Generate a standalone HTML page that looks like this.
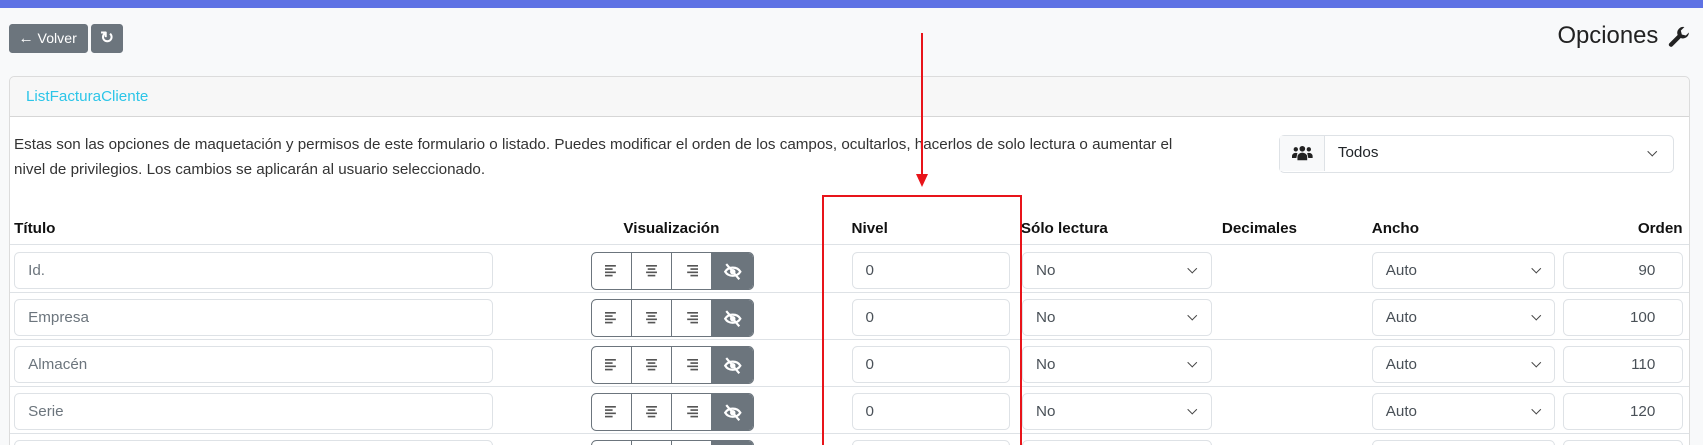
<!DOCTYPE html>
<html><head><meta charset="utf-8"><style>
html{zoom:1.0861;height:410px;overflow:hidden}
*{box-sizing:border-box;margin:0;padding:0}
body{width:1568px;height:410px;overflow:hidden;background:#f8f9fa;font-family:"Liberation Sans",sans-serif;font-size:14px;color:#212529;position:relative}
.a{position:absolute}
.btn{background:#6c757d;color:#fff;border-radius:3px;height:27px;top:22px;font-size:13px;line-height:27px}
.card{left:8px;top:70px;width:1548px;height:360px;border:1px solid #dcdcdc;border-radius:5px;background:#fff;overflow:hidden}
.hdr{left:0;top:0;width:100%;height:37px;background:#f7f7f7;border-bottom:1px solid #d6d6d6}
.in{border:1px solid #dee2e6;border-radius:5px;background:#fff;height:34px;line-height:33px;padding-left:12px;color:#495057;font-size:14px}
.th{font-weight:bold;top:203px;font-size:14px;color:#111}
.line{left:9px;width:1546px;height:1px;background:#dee2e6}
.chev{position:absolute;right:14px;top:11px;width:6px;height:6px;border-right:1.3px solid #444;border-bottom:1.3px solid #444;transform:rotate(45deg)}
.bg{border:1px solid #6c757d;border-radius:5px;height:35px;width:150px;display:flex;overflow:hidden;background:#fff}
.bg div{width:37px;border-right:1px solid #6c757d;position:relative}
.bg div:last-child{border:none;background:#6c757d;flex:1}
</style></head><body>
<div class="a" style="left:0;top:0;width:1568px;height:7px;background:#5e72e4"></div>
<div class="a btn" style="left:8px;width:73px;padding-left:9px"><span style="font-size:14px">&#8592;</span> Volver</div>
<div class="a btn" style="left:84px;width:29px;text-align:center;font-size:15px;font-weight:bold">&#8635;</div>
<div class="a" style="left:1434px;top:20px;font-size:22px;color:#222">Opciones</div>
<svg class="a" style="left:1535px;top:24px" width="22" height="22" viewBox="0 0 24 24"><path d="M22 6.5a6 6 0 0 1-8.2 5.6L5.5 20.4a2.2 2.2 0 0 1-3.1-3.1l8.3-8.3A6 6 0 0 1 17.5 1l-3.6 3.6 1 4 4 1L22 6.5z" fill="#222"/></svg>
<div class="a card">
 <div class="a hdr"><span class="a" style="left:15px;top:10px;color:#2cc5e8">ListFacturaCliente</span></div>
 <div class="a" style="left:4px;top:52px;width:1095px;line-height:23px;color:#333">Estas son las opciones de maquetación y permisos de este formulario o listado. Puedes modificar el orden de los campos, ocultarlos, hacerlos de solo lectura o aumentar el nivel de privilegios. Los cambios se aplicarán al usuario seleccionado.</div>
 <div class="a" style="left:1169px;top:53px;width:363px;height:35px;border:1px solid #dee2e6;border-radius:5px">
  <div class="a" style="left:0;top:0;width:41px;height:33px;background:#f8f9fa;border-right:1px solid #dee2e6"></div>
  <svg class="a" style="left:11px;top:9px" width="19" height="15" viewBox="0 0 19 15"><circle cx="9.5" cy="3.5" r="2.6" fill="#222"/><circle cx="3.5" cy="4" r="2" fill="#222"/><circle cx="15.5" cy="4" r="2" fill="#222"/><path d="M5 14v-3a4.5 4 0 0 1 9 0v3z" fill="#222"/><path d="M0 12v-2a3.5 3 0 0 1 5-2.5L4 12zM19 12v-2a3.5 3 0 0 0-5-2.5l1 4.5z" fill="#222"/></svg>
  <span class="a" style="left:53px;top:8px">Todos</span><div class="chev" style="right:16px;top:11px"></div>
 </div>
</div>
<div class="a th" style="left:13px">Título</div>
<div class="a th" style="left:574px">Visualización</div>
<div class="a th" style="left:784px">Nivel</div>
<div class="a th" style="left:940px">Sólo lectura</div>
<div class="a th" style="left:1125px">Decimales</div>
<div class="a th" style="left:1263px">Ancho</div>
<div class="a th" style="left:1508px">Orden</div>
<div class="a line" style="top:225px"></div>
<div id="rows"></div>
<script>
var t=["Id.","Empresa","Almacén","Serie",""],o=["90","100","110","120",""],h="";
function ic(k){var r='';for(var i=0;i<4;i++){var w=[10,7,10,7][i];var x=k==0?0:k==1?(12-w)/2:12-w;r+='<rect x="'+x+'" y="'+(i*3)+'" width="'+w+'" height="1.5" fill="#555"/>';}return '<svg width="12" height="12" viewBox="0 0 12 12" style="position:absolute;left:12px;top:11px">'+r+'</svg>';}
for(var i=0;i<5;i++){var y=226+i*43.3,iy=y+6;
h+='<div class="a in" style="left:13px;top:'+iy+'px;width:441px;color:#6c757d">'+t[i]+'</div>';
h+='<div class="a bg" style="left:544px;top:'+iy+'px"><div>'+ic(0)+'</div><div>'+ic(1)+'</div><div>'+ic(2)+'</div><div><svg width="18" height="16" viewBox="0 0 18 16" style="position:absolute;left:10px;top:9px"><path d="M2 8c3-5 11-5 14 0c-3 5-11 5-14 0z" fill="none" stroke="#fff" stroke-width="2"/><circle cx="9" cy="8" r="2.5" fill="#fff"/><path d="M3 1l12 14" stroke="#fff" stroke-width="2"/></svg></div></div>';
h+='<div class="a in" style="left:784px;top:'+iy+'px;width:146px">0</div>';
h+='<div class="a in" style="left:941px;top:'+iy+'px;width:175px">No<div class="chev"></div></div>';
h+='<div class="a in" style="left:1263px;top:'+iy+'px;width:169px">Auto<div class="chev"></div></div>';
h+='<div class="a in" style="left:1439px;top:'+iy+'px;width:111px;text-align:right;padding-right:25px">'+o[i]+'</div>';
h+='<div class="a line" style="top:'+(y+43)+'px"></div>';}
document.getElementById('rows').innerHTML=h;
</script>
<div class="a" style="left:757px;top:180px;width:184px;height:240px;border:2px solid #e8141a"></div>
<div class="a" style="left:848px;top:30px;width:2px;height:132px;background:#e8141a"></div>
<div class="a" style="left:843px;top:160px;width:0;height:0;border-left:6px solid transparent;border-right:6px solid transparent;border-top:12px solid #e8141a"></div>
</body></html>
